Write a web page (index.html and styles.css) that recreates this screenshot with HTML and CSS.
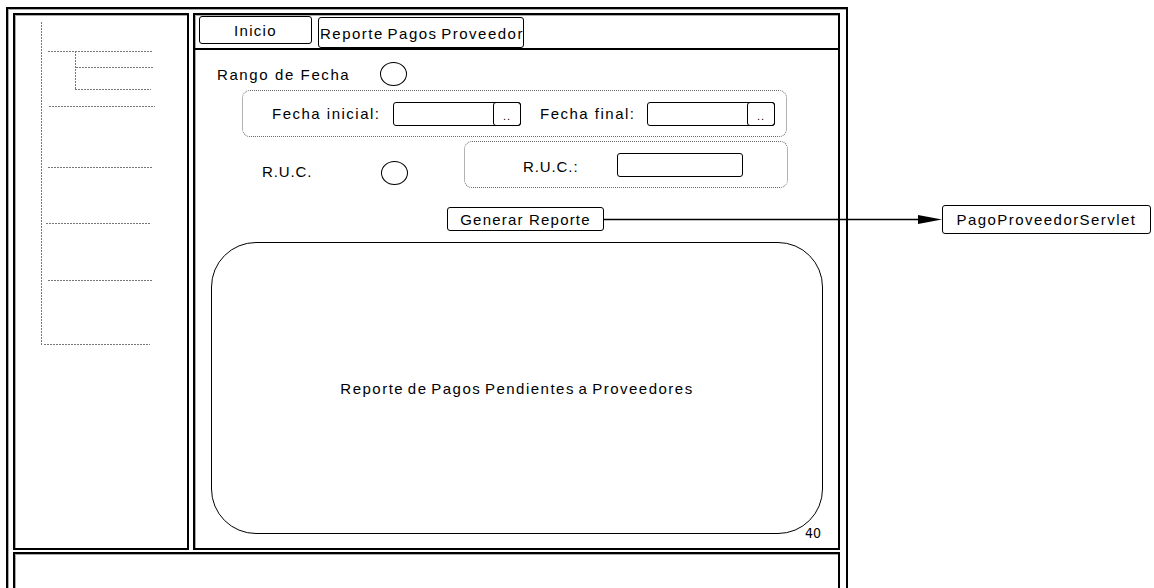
FILE: index.html
```html
<!DOCTYPE html>
<html lang="es">

<head>
    <meta charset="UTF-8">
    <meta name="viewport" content="width=device-width, initial-scale=1.0">
    <title>Reporte Pagos Proveedor</title>
    <link rel="stylesheet" href="styles.css">
</head>

<body>

    <div class="frame">
        <div class="panel sidebar">
            <!-- tree placeholder -->
            <svg class="tree" width="172" height="533" viewBox="0 0 172 533">
                <g stroke="#777" stroke-width="1" stroke-dasharray="2 1" fill="none">
                    <line x1="26.5" y1="7" x2="26.5" y2="330" />
                    <line x1="33" y1="36.5" x2="138" y2="36.5" />
                    <line x1="60.5" y1="36" x2="60.5" y2="74" />
                    <line x1="61" y1="52.5" x2="138" y2="52.5" />
                    <line x1="60" y1="74.5" x2="136" y2="74.5" />
                    <line x1="34" y1="91.5" x2="140" y2="91.5" />
                    <line x1="33" y1="152.5" x2="138" y2="152.5" />
                    <line x1="31" y1="208.5" x2="136" y2="208.5" />
                    <line x1="33" y1="265.5" x2="138" y2="265.5" />
                    <line x1="29" y1="329.5" x2="135" y2="329.5" />
                </g>
            </svg>
        </div>

        <div class="panel main">
            <div class="tabs">
                <div class="tab tab-home">Inicio</div>
                <div class="tab tab-active">Reporte Pagos Proveedor</div>
            </div>

            <div class="option-row">
                <span class="option-label wide">Rango de Fecha</span>
                <span class="radio"></span>
            </div>

            <div class="group dates">
                <span class="field-label start">Fecha inicial:</span>
                <div class="date-input"><span class="pick">..</span></div>
                <span class="field-label end">Fecha final:</span>
                <div class="date-input"><span class="pick">..</span></div>
            </div>

            <div class="ruc-row">
                <div class="ruc-choice">
                    <span class="option-label ruc-label">R.U.C.</span>
                    <span class="radio"></span>
                </div>
                <div class="group ruc">
                    <span class="field-label ruc-field">R.U.C.:</span>
                    <div class="text-input"></div>
                </div>
            </div>

            <button type="button" class="generate">Generar Reporte</button>

            <div class="report">
                Reporte de Pagos Pendientes a Proveedores
                <span class="radius-note">40</span>
            </div>
        </div>

        <div class="panel footer"></div>
    </div>

    <!-- connector to the servlet -->
    <svg class="connector" width="1154" height="588" viewBox="0 0 1154 588">
        <line x1="604" y1="219.5" x2="920" y2="219.5" stroke="#000" stroke-width="1.5" />
        <polygon points="918,215 942,219.5 918,224" fill="#000" />
    </svg>
    <div class="servlet">PagoProveedorServlet</div>

</body>

</html>
```

FILE: styles.css
```css
body {
    font-family: 'Liberation Sans', Arial, sans-serif;
    font-size: 15px;
    letter-spacing: 0.9px;
    color: #000;
    background-color: #fff;
    margin: 0;
    height: 588px;
    overflow: hidden;
    position: relative;
}

.frame {
    width: 842px;
    height: 610px;
    margin: 7px 0 0 6px;
    padding: 4px 6px 0 5px;
    box-sizing: border-box;
    border: 2px solid #000;
    box-shadow: inset 1px 1px 0 #aaa;
    display: grid;
    grid-template-columns: 176px 1fr;
    grid-template-rows: 537px 1fr;
    gap: 2px 4px;
}

.panel {
    border: 2px solid #000;
    box-shadow: inset 1px 1px 0 #aaa;
    box-sizing: border-box;
}

.tree {
    display: block;
}

.footer {
    grid-column: 1 / -1;
}

.main {
    display: flex;
    flex-direction: column;
    align-items: flex-start;
}

/* tabs */
.tabs {
    align-self: stretch;
    height: 35px;
    box-sizing: border-box;
    padding: 1px 0 0 4px;
    border-bottom: 2px solid #000;
    display: flex;
    align-items: flex-start;
    gap: 6px;
}

.tab {
    border: 1px solid #000;
    border-radius: 3px;
    box-sizing: border-box;
    white-space: nowrap;
    overflow: hidden;
}

.tab-home {
    width: 113px;
    height: 28px;
    line-height: 27px;
    text-align: center;
    letter-spacing: 1.3px;
}

.tab-active {
    width: 206px;
    height: 31px;
    margin-top: 1px;
    line-height: 31px;
    padding-left: 1px;
    letter-spacing: 1.5px;
    word-spacing: -2px;
}

/* options */
.option-row {
    display: flex;
    align-items: center;
    height: 25px;
    margin: 11px 0 0 22px;
}

.option-label.wide {
    width: 163px;
    padding-top: 2px;
    letter-spacing: 1.6px;
}

.radio {
    width: 27px;
    height: 24px;
    box-sizing: border-box;
    border: 1.5px solid #000;
    border-radius: 50%;
}

.group {
    height: 47px;
    box-sizing: border-box;
    border: 1px dotted #666;
    border-radius: 8px;
    display: flex;
    align-items: center;
}

.dates {
    width: 545px;
    margin: 4px 0 0 47px;
    padding-left: 29px;
}

.field-label.start {
    width: 121px;
    letter-spacing: 1.5px;
}

.field-label.end {
    width: 107px;
    margin-left: 19px;
    letter-spacing: 1.5px;
}

.date-input {
    width: 128px;
    height: 24px;
    box-sizing: border-box;
    border: 1px solid #000;
    border-radius: 3px;
    display: flex;
    justify-content: flex-end;
}

.pick {
    width: 28px;
    margin: -1px -1px -1px 0;
    box-sizing: border-box;
    border: 1px solid #000;
    border-radius: 3px;
    font-size: 11px;
    letter-spacing: 1px;
    text-align: center;
    line-height: 26px;
}

.ruc-row {
    display: flex;
    align-items: flex-start;
    margin: 4px 0 0 67px;
}

.ruc-choice {
    display: flex;
    align-items: center;
    height: 23px;
    margin-top: 20px;
}

.ruc-label {
    width: 119px;
    padding-bottom: 2px;
}

.ruc {
    width: 324px;
    margin-left: 56px;
    padding-left: 58px;
}

.field-label.ruc-field {
    width: 94px;
    padding-top: 4px;
}

.text-input {
    width: 126px;
    height: 24px;
    box-sizing: border-box;
    border: 1px solid #000;
    border-radius: 3px;
}

.generate {
    width: 157px;
    height: 24px;
    margin: 19px 0 0 252px;
    padding: 0;
    font: inherit;
    letter-spacing: 1.2px;
    color: #000;
    background-color: #fff;
    border: 1px solid #000;
    border-radius: 3px;
}

.report {
    position: relative;
    width: 612px;
    height: 292px;
    margin: 11px 0 0 16px;
    box-sizing: border-box;
    border: 1.5px solid #000;
    border-radius: 45px;
    display: flex;
    align-items: center;
    justify-content: center;
    letter-spacing: 1.5px;
    word-spacing: -2px;
}

.radius-note {
    position: absolute;
    right: 1px;
    bottom: -7px;
    font-family: 'DejaVu Sans Condensed', 'DejaVu Sans', sans-serif;
    font-stretch: condensed;
    font-size: 14px;
    letter-spacing: 0;
    line-height: 13px;
}

.connector {
    position: absolute;
    left: 0;
    top: 0;
    pointer-events: none;
}

.servlet {
    position: absolute;
    left: 942px;
    top: 205px;
    width: 209px;
    height: 29px;
    box-sizing: border-box;
    border: 1px solid #000;
    border-radius: 3px;
    line-height: 27px;
    text-align: center;
    letter-spacing: 1.45px;
}
```
